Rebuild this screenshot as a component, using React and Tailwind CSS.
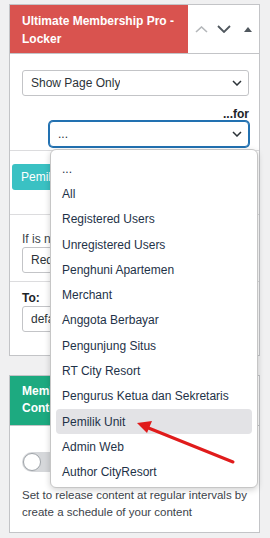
import React from "react";

const font = { fontFamily: '"Liberation Sans", Arial, sans-serif' };

// small chevron used inside the selects
const Chevron = () => (
  <svg width="10" height="6" viewBox="0 0 10 6" className="shrink-0">
    <polyline points="1,1 5,5 9,1" fill="none" stroke="#2c3338" strokeWidth="1.5" />
  </svg>
);

const Select = ({ text, className = "" }) => (
  <div
    className={`flex items-center justify-between h-[26px] bg-white border border-[#c3c4c7] rounded-[3px] pl-[8px] pr-[6px] text-[12px] text-[#2c3338] ${className}`}
  >
    <span className="whitespace-nowrap overflow-hidden">{text}</span>
    <Chevron />
  </div>
);

const roles = [
  "...",
  "All",
  "Registered Users",
  "Unregistered Users",
  "Penghuni Apartemen",
  "Merchant",
  "Anggota Berbayar",
  "Pengunjung Situs",
  "RT City Resort",
  "Pengurus Ketua dan Sekretaris",
  "Pemilik Unit",
  "Admin Web",
  "Author CityResort",
];

const App = () => {
  return (
    <div className="relative w-[270px] h-[538px] overflow-hidden bg-[#f0f0f1] pt-[4px]" style={font}>
      {/* Locker box */}
      <div className="ml-[9px] w-[251px] bg-white border border-[#c3c4c7]">
        <div className="flex h-[49px] border-b border-[#c3c4c7]">
          <div className="w-[178px] bg-[#d9534f] text-white font-bold text-[12px] leading-[18px] pt-[7px] pl-[12px] pr-[10px]">
            Ultimate Membership Pro - Locker
          </div>
          <div className="flex items-center flex-1 pl-[7px]">
            <svg width="13" height="7" viewBox="0 0 13 7">
              <polyline points="1,6 6.5,1 12,6" fill="none" stroke="#b4b7ba" strokeWidth="1.6" />
            </svg>
            <svg width="14" height="8" viewBox="0 0 14 8" className="ml-[9px]">
              <polyline points="1,1 7,7 13,1" fill="none" stroke="#50575e" strokeWidth="1.8" />
            </svg>
            <svg width="8" height="5" viewBox="0 0 8 5" className="ml-[13px]">
              <polygon points="0,5 4,0 8,5" fill="#50575e" />
            </svg>
          </div>
        </div>

        <div className="pl-[12px] pr-[10px] pt-[16px] pb-[3px]">
          <Select text="Show Page Only" />
          <div className="flex justify-end items-end h-[25px] text-[12px] font-bold leading-[14px] text-[#1d2327]">
            ...for
          </div>
          <div className="ml-[27px] flex items-center justify-between h-[26px] bg-white border border-[#2271b1] rounded-[4px] pl-[8px] pr-[6px] text-[12px] text-[#2c3338] shadow-[0_0_0_1px_#2271b1]">
            <span>...</span>
            <Chevron />
          </div>
        </div>

        <div className="border-t border-[#dcdcde] pl-[2px] pt-[13px] pb-[24px]">
          <div className="inline-flex items-center h-[26px] px-[9px] bg-[#3ac1c3] rounded-[3px] text-white text-[12px]">
            Pemilik Unit
          </div>
        </div>

        <div className="border-t border-[#dcdcde] pl-[12px] pr-[10px] pt-[17px] pb-[8px]">
          <div className="text-[12px] leading-[14px] text-[#3c434a] mb-[1px]">If is not allowed redirect</div>
          <Select text="Redirect to a page" />
        </div>

        <div className="border-t border-[#dcdcde] pl-[12px] pr-[10px] pt-[9px] pb-[23px]">
          <div className="text-[12px] leading-[14px] font-bold text-[#1d2327] mb-[1px]">To:</div>
          <Select text="default" />
        </div>
      </div>

      {/* Drip content box */}
      <div className="ml-[9px] mt-[19px] w-[251px] bg-white border border-[#c3c4c7]">
        <div className="flex h-[50px] border-b border-[#c3c4c7]">
          <div className="w-[178px] bg-[#1daa80] text-white font-bold text-[12px] leading-[17px] pt-[7px] pl-[12px] pr-[10px]">
            Membership Pro - Drip Content
          </div>
        </div>
        <div className="pl-[12px] pr-[6px] pt-[26px] pb-[11px]">
          <div className="relative w-[38px] h-[20px] rounded-full bg-[#d5d7da]">
            <div className="absolute left-[1px] top-[1px] w-[18px] h-[18px] rounded-full bg-white border border-[#9ea3a8]" />
          </div>
          <p className="mt-[15px] text-[11.5px] leading-[17px] text-[#3c434a]">
            Set to release content at regular intervals by create a schedule of your content
          </p>
        </div>
      </div>

      {/* open dropdown menu */}
      <div className="absolute left-[50px] top-[149px] w-[208px] h-[339px] bg-white border border-[#c6c6c6] rounded-[6px] shadow-[0_2px_6px_rgba(0,0,0,0.18)] px-[5px] pt-[6px]">
        {roles.map((role) => (
          <div
            key={role}
            className={`flex items-center h-[25.3px] px-[6px] rounded-[4px] text-[12px] text-[#1e3248] whitespace-nowrap ${
              role === "Pemilik Unit" ? "bg-[#e3e3e6]" : ""
            }`}
          >
            {role}
          </div>
        ))}
      </div>

      {/* red annotation arrow */}
      <svg className="absolute left-0 top-0" width="270" height="538" viewBox="0 0 270 538">
        <line x1="233" y1="462" x2="146" y2="427" stroke="#e01b1b" strokeWidth="3" strokeLinecap="round" />
        <polygon points="137,423 152,421 147,433" fill="#e01b1b" />
      </svg>
    </div>
  );
};

export default App;
